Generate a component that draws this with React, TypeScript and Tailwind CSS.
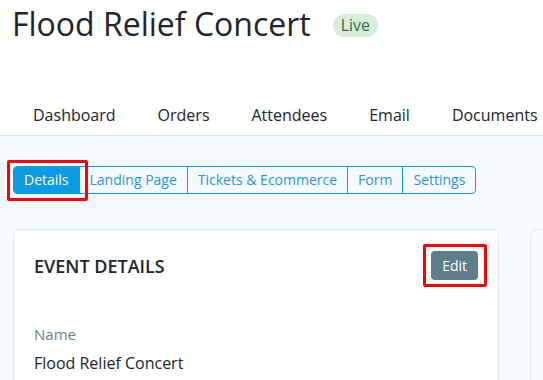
import type { ReactNode } from "react";

const navItems = ["Dashboard", "Orders", "Attendees", "Email", "Documents"];
const tabs = ["Details", "Landing Page", "Tickets & Ecommerce", "Form", "Settings"];

function Highlight({ children, className }: { children: ReactNode; className: string }) {
  return (
    <div className="relative">
      {children}
      <span className={`pointer-events-none absolute rounded-[2px] border-[3px] border-[#ff0000] ${className}`} />
    </div>
  );
}

function App() {
  return (
    <div className="h-[380px] w-[543px] overflow-hidden bg-[#f6f9fd] font-['Open_Sans',sans-serif] text-[#212529]">
      <header className="border-b border-[#dce4ec] bg-white">
        <div className="flex items-center gap-[22px] px-3 pt-1">
          <h1 className="text-[32px] leading-10 font-normal whitespace-nowrap">Flood Relief Concert</h1>
          <span className="mt-[3px] rounded-full bg-[#d8eedb] px-2 text-[16px] leading-[23px] text-[#3a6b45]">Live</span>
        </div>
        <nav className="mt-[59px] flex pl-[12px] whitespace-nowrap">
          {navItems.map((item) => (
            <span key={item} className="px-[21px] pb-2 text-[16px] leading-6 text-[#212529]">
              {item}
            </span>
          ))}
        </nav>
      </header>

      <div className="px-[13px] pt-[30px]">
        <div className="flex">
          <div className="flex rounded border border-[#0d9ae2]">
            {tabs.map((tab, i) => {
              const button = (
                <button
                  type="button"
                  className={`h-[26px] px-[10px] text-[14px] leading-[26px] whitespace-nowrap ${
                    i === 0 ? "rounded-l-[3px] bg-[#0b9be3] text-white" : "border-l border-[#0d9ae2] text-[#1b9ae0]"
                  }`}
                >
                  {tab}
                </button>
              );
              return i === 0 ? (
                <Highlight key={tab} className="-top-[7px] -right-[9px] -bottom-[8px] -left-[7px]">
                  {button}
                </Highlight>
              ) : (
                <div key={tab}>{button}</div>
              );
            })}
          </div>
        </div>

        <div className="mt-[35px] flex gap-[31px]">
          <div className="w-[486px] shrink-0 rounded-md border border-[#e1e8ef] bg-white px-5 pt-[21px] pb-6">
            <div className="flex items-center justify-between">
              <h2 className="text-[18px] leading-6 font-semibold text-[#212529]">EVENT DETAILS</h2>
              <Highlight className="-top-[7px] -right-[9px] -bottom-[7px] -left-[8px]">
                <button type="button" className="h-[29px] rounded bg-[#607d8b] px-[11px] text-[14px] leading-[29px] text-white">
                  Edit
                </button>
              </Highlight>
            </div>
            <p className="mt-[43px] text-[15px] leading-[22px] text-[#6b7f8c]">Name</p>
            <p className="mt-[6px] text-[16px] leading-6 text-[#212529]">Flood Relief Concert</p>
          </div>
          <div className="w-[200px] shrink-0 rounded-md border border-[#e1e8ef] bg-[#f6f9fd]" />
        </div>
      </div>
    </div>
  );
}

export default App;
